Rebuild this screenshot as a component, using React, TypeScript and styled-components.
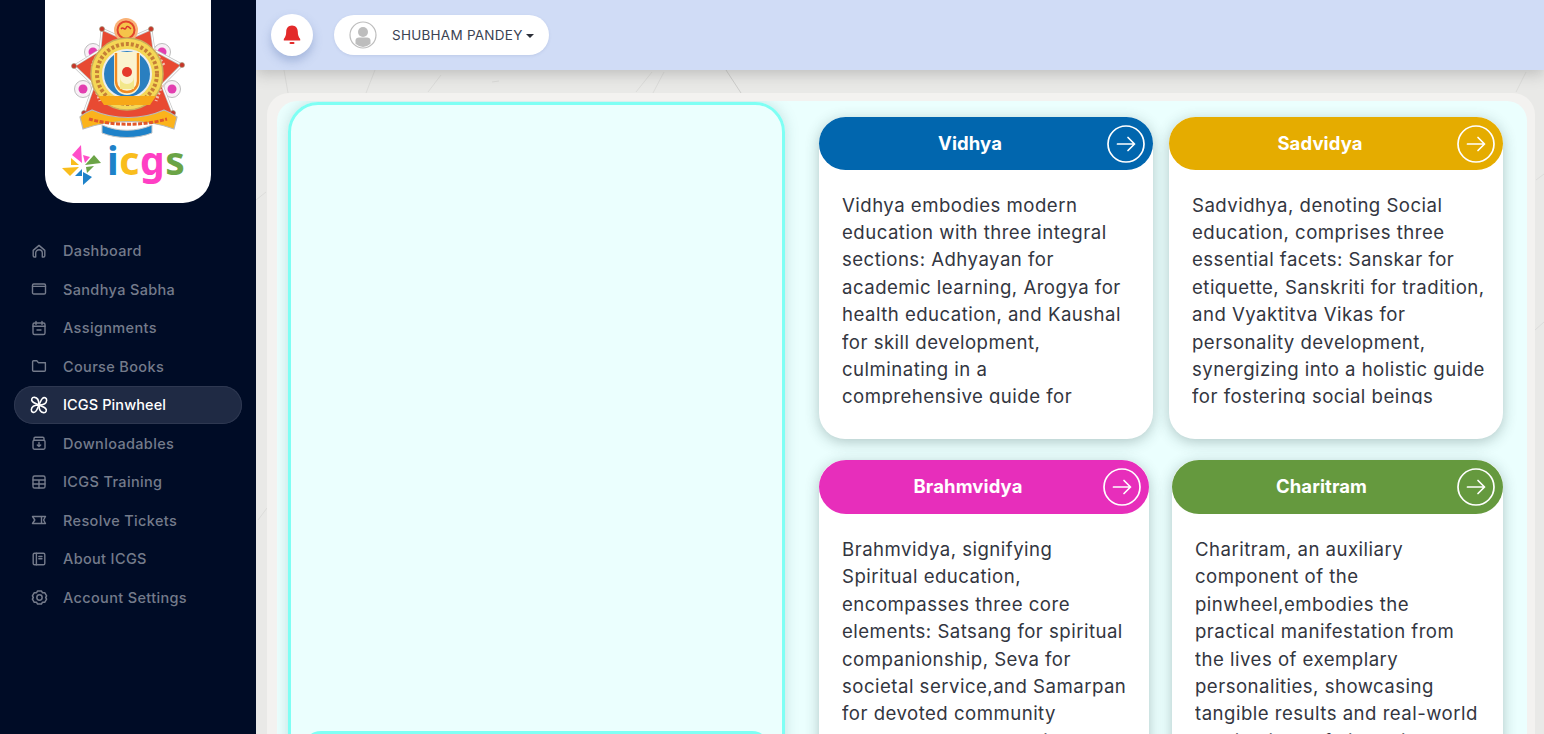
import React from "react";
import styled, { createGlobalStyle } from "styled-components";

const Global = createGlobalStyle`
  html, body { margin: 0; padding: 0; height: 100%; overflow: hidden; background: #e9e9e7; }
  #root { height: 100%; }
  * { box-sizing: border-box; }
`;

const FONT = `Inter, "Noto Sans", sans-serif`;

const Page = styled.div`
  display: grid;
  grid-template-columns: 256px 1fr;
  width: 1544px;
  height: 734px;
  overflow: hidden;
  font-family: ${FONT};
`;

const Sidebar = styled.aside`
  background: #000c26;
  display: flex;
  flex-direction: column;
  height: 734px;
`;

const LogoCard = styled.div`
  width: 166px;
  height: 203px;
  margin-left: 45px;
  background: #fff;
  border-radius: 0 0 28px 28px;
  flex: none;
  display: flex;
  flex-direction: column;
  padding-top: 17px;
`;

const EmblemSlot = styled.div`
  margin-left: 25px;
  height: 122px;
`;

const BrandRow = styled.div`
  display: flex;
  align-items: flex-start;
  margin: 6px 0 0 17px;
  height: 42px;
`;

const BrandText = styled.div`
  display: flex;
  font-family: "Noto Sans", sans-serif;
  font-size: 39px;
  line-height: 36px;
  font-weight: 700;
  letter-spacing: 0.6px;
  margin-left: 3px;
  margin-top: -3px;
`;

const BrandLetter = styled.span<{ $c: string }>`
  color: ${(p) => p.$c};
`;

const Nav = styled.nav`
  display: flex;
  flex-direction: column;
  margin-top: 28.5px;
  padding-left: 14px;
  width: 242px;
`;

const NavItem = styled.div<{ $active?: boolean }>`
  height: 38.5px;
  display: flex;
  align-items: center;
  gap: 15px;
  padding-left: 16px;
  border-radius: 20px;
  font-size: 14.5px;
  font-weight: 500;
  letter-spacing: ${(p) => (p.$active ? 0.1 : 0.35)}px;
  white-space: nowrap;
  color: ${(p) => (p.$active ? "#ffffff" : "#747b8b")};
  background: ${(p) => (p.$active ? "#1f2a44" : "transparent")};
  box-shadow: ${(p) => (p.$active ? "inset 0 0 0 1px #2e3851" : "none")};
`;

const IconSlot = styled.span`
  flex: none;
  width: 18px;
  height: 18px;
  display: flex;
  align-items: center;
  justify-content: center;
`;

const Main = styled.main`
  position: relative;
  display: flex;
  flex-direction: column;
  height: 734px;
  overflow: hidden;
  background: #e9e9e7;
`;

const Veins = styled.svg`
  position: absolute;
  left: 0;
  top: 0;
  width: 1288px;
  height: 734px;
`;

const Topbar = styled.header`
  position: relative;
  flex: none;
  height: 70px;
  background: #d0dcf6;
  box-shadow: 0 4px 14px rgba(90, 90, 90, 0.3);
  display: flex;
  align-items: center;
  padding: 0 0 0 15px;
  gap: 21px;
`;

const BellButton = styled.div`
  width: 42px;
  height: 42px;
  border-radius: 50%;
  background: #fff;
  box-shadow: 0 5px 10px rgba(80, 110, 170, 0.35);
  display: flex;
  align-items: center;
  justify-content: center;
`;

const UserPill = styled.div`
  width: 215px;
  height: 40px;
  border-radius: 20px;
  background: #fff;
  display: flex;
  align-items: center;
  padding-left: 15px;
  box-shadow: 0 1px 3px rgba(90, 110, 160, 0.15);
`;

const UserName = styled.span`
  margin-left: 15px;
  font-size: 13.5px;
  letter-spacing: 0.25px;
  color: #3b4252;
  white-space: nowrap;
`;

const Caret = styled.span`
  width: 0;
  height: 0;
  margin-left: 3px;
  margin-top: 2px;
  border-left: 4px solid transparent;
  border-right: 4px solid transparent;
  border-top: 4px solid #2c2f38;
`;

const Panel = styled.section`
  position: relative;
  margin: 23px 9px 0 11px;
  flex: 1;
  min-height: 0;
  padding: 8px 8px 0 10px;
  background: #f3f2f0;
  border-radius: 22px 22px 0 0;
  overflow: hidden;
`;

const Inner = styled.div`
  height: 100%;
  background: #ebfffe;
  border-radius: 20px 20px 0 0;
  display: flex;
  padding: 1px 0 0 11px;
  overflow: hidden;
`;

const VideoFrame = styled.div`
  flex: none;
  width: 497px;
  height: 760px;
  border: 3px solid #7ffff4;
  border-radius: 30px;
  box-shadow: 0 0 14px rgba(70, 130, 130, 0.25);
  padding: 626px 12px 0;
`;

const NextFrame = styled.div`
  height: 40px;
  border: 3px solid #7ffff4;
  border-bottom: 0;
  border-radius: 18px 18px 0 0;
`;

const CardArea = styled.div`
  display: flex;
  flex-direction: column;
  gap: 21px;
  margin-left: 34px;
  padding-top: 15px;
`;

const CardRow = styled.div<{ $gap: number }>`
  display: flex;
  gap: ${(p) => p.$gap}px;
`;

const Card = styled.article<{ $w: number }>`
  width: ${(p) => p.$w}px;
  background: #fff;
  border-radius: 26px;
  padding-bottom: 35px;
  box-shadow: 0 3px 14px rgba(40, 70, 70, 0.3);
  flex: none;
`;

const CardHeader = styled.div<{ $bg: string; $h: number }>`
  height: ${(p) => p.$h}px;
  border-radius: 27px;
  background: ${(p) => p.$bg};
  display: flex;
  align-items: center;
  padding: 0 8px 0 14px;
`;

const CardTitle = styled.h3`
  flex: 1;
  margin: 0 0 2px;
  text-align: center;
  color: #fff;
  font-size: 18.5px;
  font-weight: 700;
  letter-spacing: 0.1px;
`;

const ArrowCircle = styled.svg`
  flex: none;
  width: 38px;
  height: 38px;
`;

const CardBody = styled.div<{ $x: number; $top: number }>`
  margin: ${(p) => p.$top}px 0 0 ${(p) => p.$x}px;
  height: 212px;
  overflow: hidden;
  color: #33363f;
  font-size: 18.6px;
  line-height: 27.4px;
  letter-spacing: 0.48px;
`;

const Line = styled.span`
  display: block;
  white-space: nowrap;
`;

const stroke = {
  fill: "none",
  stroke: "currentColor",
  strokeWidth: 1.4,
  strokeLinecap: "round" as const,
  strokeLinejoin: "round" as const,
};

const Ico = ({ children, size = 16 }: { children: React.ReactNode; size?: number }) => (
  <svg width={size} height={size} viewBox="0 0 16 16" {...stroke}>
    {children}
  </svg>
);

const blade = "M8 8C8 5.5 7.5 1.5 4 1.2 1.500 1 .8 3.500 2.200 5 3.500 6.400 6 7 8 8Z";

const icons: Record<string, React.ReactNode> = {
  home: (
    <Ico>
      <path d="M2.2 7.4 8 2.4l5.8 5v5.4a1.2 1.2 0 0 1-1.2 1.2h-1.3V10a3.3 3.3 0 0 0-6.6 0v4H3.4a1.2 1.2 0 0 1-1.2-1.2Z" />
    </Ico>
  ),
  sabha: (
    <Ico>
      <rect x="1.5" y="3" width="13" height="10" rx="1.3" />
      <path d="M1.5 5.4h13" />
    </Ico>
  ),
  calendar: (
    <Ico>
      <rect x="2" y="3" width="12" height="11.5" rx="1.6" />
      <path d="M5 1.4v3M11 1.4v3M2 6.2h12M6 10h4" />
    </Ico>
  ),
  folder: (
    <Ico>
      <path d="M1.6 3.8c0-.6.5-1 1-1h3.2l1.6 1.8h6c.6 0 1 .5 1 1v6.6c0 .6-.4 1-1 1H2.6c-.5 0-1-.4-1-1Z" />
      <path d="M7.4 4.6h7" />
    </Ico>
  ),
  pinwheel: (
    <Ico size={18}>
      {[0, 90, 180, 270].map((a) => (
        <path key={a} d={blade} transform={`rotate(${a} 8 8)`} />
      ))}
    </Ico>
  ),
  download: (
    <Ico>
      <rect x="2" y="5.200" width="12" height="9" rx="1.400" />
      <path d="M3 5.200V3.400c0-.7.500-1.200 1.200-1.200h7.600c.7 0 1.200.5 1.200 1.200v1.800M8 7.500v4M6.300 9.900 8 11.500l1.700-1.600" />
    </Ico>
  ),
  table: (
    <Ico>
      <rect x="2" y="2" width="12" height="12" rx="1.600" />
      <path d="M2 6h12M2 10h12M8 6v8" />
    </Ico>
  ),
  ticket: (
    <Ico>
      <path d="M1.500 4.500h13M1.500 11.500h13M1.500 4.500 3.800 8l-2.300 3.500M14.500 4.500 12.600 8l1.900 3.500M10.500 4.800v6.400" />
    </Ico>
  ),
  about: (
    <Ico>
      <rect x="2.200" y="2.200" width="11.600" height="11.600" rx="1.400" />
      <path d="M5.400 2.200v11.600M7.800 5.500h3.200M7.800 7.800h3.200" />
    </Ico>
  ),
  settings: (
    <Ico size={17}>
      <path d="M6.200 1.900h3.600l1.100 1.700 2-.1 1.800 3-.9 1.500.9 1.500-1.800 3-2-.1-1.100 1.700H6.200l-1.100-1.700-2 .1-1.800-3L2.200 8l-.9-1.500 1.800-3 2 .1Z" />
      <circle cx="8" cy="8" r="2.500" />
    </Ico>
  ),
};

const navItems = [
  ["home", "Dashboard"],
  ["sabha", "Sandhya Sabha"],
  ["calendar", "Assignments"],
  ["folder", "Course Books"],
  ["pinwheel", "ICGS Pinwheel"],
  ["download", "Downloadables"],
  ["table", "ICGS Training"],
  ["ticket", "Resolve Tickets"],
  ["about", "About ICGS"],
  ["settings", "Account Settings"],
];

const Emblem = () => {
  const dots: [number, number][] = [
    [32, 12],
    [81, 12],
    [4, 49],
    [112, 48],
    [14, 96],
    [103, 96],
  ];
  const flowers: [number, number][] = [
    [23, 35],
    [92, 35],
    [13, 72],
    [102, 72],
  ];
  const star = "M32 12 56 23 81 12 84 33 112 48 92 68 103 96 57 104 14 96 24 68 4 49 30 33Z";
  return (
    <svg width="116" height="122" viewBox="0 0 116 122">
      {flowers.map(([x, y]) => (
        <g key={`${x}-${y}`}>
          <circle cx={x} cy={y} r="8.500" fill="#f8f0f6" stroke="#bdbdbd" strokeWidth="1" />
          <circle cx={x} cy={y} r="4.500" fill="#e23fb0" />
        </g>
      ))}
      <path d={star} fill="#e84a32" stroke="#c4c4c4" strokeWidth="2.600" strokeLinejoin="round" />
      <path d={star} fill="none" stroke="#fff" strokeWidth="1.200" strokeLinejoin="round" />
      <path d="M30 33 22 48M84 33 94 48M24 68 30 84M92 68 86 84" stroke="#f6c2b4" strokeWidth="3" strokeDasharray="2 2" fill="none" />
      {dots.map(([x, y]) => (
        <circle key={`${x}${y}`} cx={x} cy={y} r="2.500" fill="#c73428" stroke="#9c9c7c" strokeWidth="0.600" />
      ))}
      <circle cx="56" cy="13" r="12" fill="#f9b277" />
      <circle cx="56" cy="13" r="8.500" fill="#f5c44a" stroke="#e2452c" strokeWidth="2" />
      <path d="M51 12c2-3 4 2 5-1s3-1 5 1" stroke="#d9322a" strokeWidth="1.400" fill="none" />
      <circle cx="57" cy="57" r="36" fill="#f5d756" stroke="#c9b05c" strokeWidth="1.500" />
      <circle cx="57" cy="57" r="30" fill="none" stroke="#b5622c" strokeWidth="4" strokeDasharray="3 2" opacity="0.75" />
      <circle cx="57" cy="57" r="24" fill="#2a7fc0" stroke="#ededed" strokeWidth="2" />
      <path d="M44 35h26v30a13 13 0 0 1-26 0Z" fill="#fbf3cf" />
      <path d="M46 36v28a11 11 0 0 0 22 0V36" fill="none" stroke="#f08a22" strokeWidth="2.400" />
      <path d="M50 60a7 7 0 0 0 14 0v12H50Z" fill="#f3e78a" />
      <circle cx="57" cy="55" r="5" fill="#e5392c" />
      <path d="M28 79h58l-6 9H34Z" fill="#f7a818" />
      <path d="M32 108c16 7 34 7 50 0v8c-15 6-35 6-50 0Z" fill="#1e82c9" stroke="#c8c8c8" strokeWidth="1" />
      <path d="M10 100c3-3 7-5 12-7 22 10 50 10 72 0 5 2 9 4 13 7l-3 12c-26-10-64-10-91 0Z" fill="#fbb31c" stroke="#b9b9b9" strokeWidth="1.200" />
      <path d="M19 102c24 7 54 7 78 0" fill="none" stroke="#e2582a" strokeWidth="3" strokeDasharray="4 1.500" />
    </svg>
  );
};

const Pinwheel = () => (
  <svg width="42" height="42" viewBox="0 0 42 42">
    <polygon points="19,0 10,10 20,18" fill="#ff4fc8" />
    <polygon points="21,10 28,12 23,18" fill="#ff4fc8" />
    <polygon points="39,18 23,20 32,10" fill="#6ba446" />
    <polygon points="24,22 32,21 25,28" fill="#6ba446" />
    <polygon points="21,40 21,27 30,32" fill="#1e82c9" />
    <polygon points="13,31 20,24 20,31" fill="#1e82c9" />
    <polygon points="0,23 17,22 8,31" fill="#f9bd1d" />
    <polygon points="9,13 17,20 9,20" fill="#f9bd1d" />
  </svg>
);

const cards = [
  [
    {
      w: 334,
      x: 23,
      color: "#0166ae",
      title: "Vidhya",
      lines: [
        "Vidhya embodies modern",
        "education with three integral",
        "sections: Adhyayan for",
        "academic learning, Arogya for",
        "health education, and Kaushal",
        "for skill development,",
        "culminating in a",
        "comprehensive guide for",
      ],
    },
    {
      w: 334,
      x: 23,
      color: "#e5ac00",
      title: "Sadvidya",
      lines: [
        "Sadvidhya, denoting Social",
        "education, comprises three",
        "essential facets: Sanskar for",
        "etiquette, Sanskriti for tradition,",
        "and Vyaktitva Vikas for",
        "personality development,",
        "synergizing into a holistic guide",
        "for fostering social beings",
      ],
    },
  ],
  [
    {
      w: 330,
      x: 23,
      color: "#e72ebb",
      title: "Brahmvidya",
      lines: [
        "Brahmvidya, signifying",
        "Spiritual education,",
        "encompasses three core",
        "elements: Satsang for spiritual",
        "companionship, Seva for",
        "societal service,and Samarpan",
        "for devoted community",
        "engagement, converging to",
      ],
    },
    {
      w: 331,
      x: 23,
      color: "#65993e",
      title: "Charitram",
      lines: [
        "Charitram, an auxiliary",
        "component of the",
        "pinwheel,embodies the",
        "practical manifestation from",
        "the lives of exemplary",
        "personalities, showcasing",
        "tangible results and real-world",
        "applications of virtue lived out",
      ],
    },
  ],
];

export default function App() {
  return (
    <Page>
      <Global />
      <Sidebar>
        <LogoCard>
          <EmblemSlot>
            <Emblem />
          </EmblemSlot>
          <BrandRow>
            <Pinwheel />
            <BrandText>
              <BrandLetter $c="#1e82c9">i</BrandLetter>
              <BrandLetter $c="#f9bd1d">c</BrandLetter>
              <BrandLetter $c="#ff3fc4">g</BrandLetter>
              <BrandLetter $c="#6ba446">s</BrandLetter>
            </BrandText>
          </BrandRow>
        </LogoCard>
        <Nav>
          {navItems.map(([icon, label]) => (
            <NavItem key={label} $active={label === "ICGS Pinwheel"}>
              <IconSlot>{icons[icon]}</IconSlot>
              {label}
            </NavItem>
          ))}
        </Nav>
      </Sidebar>
      <Main>
        <Veins viewBox="0 0 1288 734" fill="none" stroke="#dcdcda" strokeWidth="1">
          <path d="M28 70 32 93M119 70 110 93M185 75 172 92M396 72 380 92M408 72 397 93M236 82l7-1M1270 72l-10 20M1280 180l8-6M1279 330l9-8M0 200l10-8M2 520l9-12" />
          <path d="M470 70 485 93" stroke="#cdcdcb" />
        </Veins>
        <Topbar>
          <BellButton>
            <svg width="18" height="20" viewBox="0 0 18 20">
              <path
                d="M9 .5c3.700 0 5.800 2.800 5.800 6.200 0 3.200.8 5.200 2.400 7.300v1.600H.8V14c1.600-2.100 2.400-4.100 2.400-7.300C3.200 3.300 5.300.5 9 .5Z"
                fill="#e32a2a"
              />
              <rect x="6.500" y="17" width="5" height="2" rx="1" fill="#e32a2a" />
            </svg>
          </BellButton>
          <UserPill>
            <svg width="28" height="28" viewBox="0 0 28 28">
              <circle cx="14" cy="14" r="13" fill="#fff" stroke="#bdbdbd" strokeWidth="1.200" />
              <circle cx="14" cy="11" r="5" fill="#bdbdbd" />
              <path d="M6.500 19.500c0-1.800 1.500-3 3.500-3h8c2 0 3.500 1.200 3.500 3v3.300A12.500 12.500 0 0 1 14 26a12.500 12.500 0 0 1-7.500-3.200Z" fill="#bdbdbd" />
            </svg>
            <UserName>SHUBHAM PANDEY</UserName>
            <Caret />
          </UserPill>
        </Topbar>
        <Panel>
          <Inner>
            <VideoFrame>
              <NextFrame />
            </VideoFrame>
            <CardArea>
              {cards.map((row, i) => (
                <CardRow key={i} $gap={i === 0 ? 16 : 23}>
                  {row.map((c) => (
                    <Card key={c.title} $w={c.w}>
                      <CardHeader $bg={c.color} $h={i === 0 ? 53 : 54}>
                        <CardTitle>{c.title}</CardTitle>
                        <ArrowCircle viewBox="0 0 38 38" fill="none" stroke="#fff" strokeWidth="1.700" strokeLinecap="round" strokeLinejoin="round">
                          <circle cx="19" cy="19" r="18" />
                          <path d="M10.500 19h17M21 12.500l6.500 6.500-6.500 6.500" />
                        </ArrowCircle>
                      </CardHeader>
                      <CardBody $x={c.x} $top={i === 0 ? 21.5 : 22.5}>
                        {c.lines.map((l) => (
                          <Line key={l}>{l}</Line>
                        ))}
                      </CardBody>
                    </Card>
                  ))}
                </CardRow>
              ))}
            </CardArea>
          </Inner>
        </Panel>
      </Main>
    </Page>
  );
}
